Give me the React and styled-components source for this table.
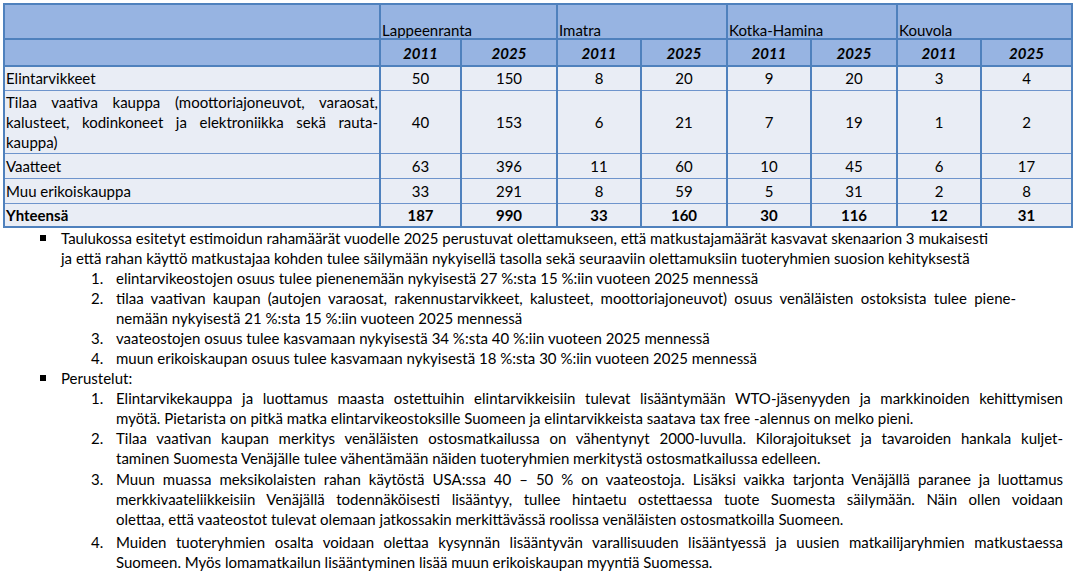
import React from "react";
import styled, { createGlobalStyle } from "styled-components";

const Global = createGlobalStyle`
  html, body { margin: 0; padding: 0; background: #fff; }
  body {
    font-family: Lato, "Open Sans", "Liberation Sans", sans-serif;
    font-size: 15px;
    color: #000;
  }
`;

const BORDER = "#4f81bd";

const Page = styled.div`
  width: 1076px;
  padding: 3px 0 0 3px;
  box-sizing: border-box;
`;

const Table = styled.table`
  border-collapse: collapse;
  table-layout: fixed;
  width: 1068px;
  border: 2px solid ${BORDER};
  font-size: 15px;
  line-height: 20px;
`;

const Row = styled.tr`
  height: ${(p) => p.$h}px;
`;

const Cell = styled.td`
  padding: 0 1px;
  background: ${(p) => (p.$head ? "#97b4e2" : "#e9edf5")};
  border-left: 2px solid ${BORDER};
  border-right: 2px solid ${BORDER};
  border-top: ${(p) => (p.$head ? 2 : 1)}px solid ${(p) => (p.$head ? BORDER : "#6e94cc")};
  border-bottom: ${(p) => (p.$head ? 2 : 1)}px solid ${(p) => (p.$head ? BORDER : "#6e94cc")};
  text-align: ${(p) => p.$align || "center"};
  vertical-align: ${(p) => p.$valign || "middle"};
  line-height: ${(p) => (p.$valign === "bottom" ? "16px" : "20px")};
  font-weight: ${(p) => (p.$bold ? 700 : 400)};
  font-style: ${(p) => (p.$italic ? "italic" : "normal")};
  white-space: nowrap;
  overflow: hidden;
`;

const Line = styled.div`
  text-align: ${(p) => (p.$justify ? "justify" : "left")};
  text-align-last: ${(p) => (p.$justify ? "justify" : "auto")};
`;

const Notes = styled.div`
  line-height: 20px;
  font-size: 15px;
`;

const Bullet = styled.div`
  display: flex;
  padding-left: 37px;
  padding-right: ${(p) => p.$right}px;
`;

const BulletMark = styled.span`
  flex: none;
  width: 21px;
  &::before {
    content: "";
    display: block;
    width: 6px;
    height: 6px;
    margin-top: 7px;
    background: #000;
  }
`;

const Numbered = styled.div`
  display: flex;
  padding-left: 88px;
  padding-right: ${(p) => p.$right}px;
  margin-top: ${(p) => p.$gap || 0}px;
`;

const NumMark = styled.span`
  flex: none;
  width: 25px;
`;

const Body = styled.div`
  flex: 1;
  min-width: 0;
`;

const cols = [376, 81, 96, 84, 86, 84, 86, 84, 91];
const cities = ["Lappeenranta", "Imatra", "Kotka-Hamina", "Kouvola"];

const rows = [
  { label: ["Elintarvikkeet"], vals: [50, 150, 8, 20, 9, 20, 3, 4], h: 24 },
  {
    label: [
      "Tilaa vaativa kauppa (moottoriajoneuvot, varaosat,",
      "kalusteet, kodinkoneet ja elektroniikka sekä rauta-",
      "kauppa)",
    ],
    vals: [40, 153, 6, 21, 7, 19, 1, 2],
    h: 63,
  },
  { label: ["Vaatteet"], vals: [63, 396, 11, 60, 10, 45, 6, 17], h: 25 },
  { label: ["Muu erikoiskauppa"], vals: [33, 291, 8, 59, 5, 31, 2, 8], h: 25 },
  { label: ["Yhteensä"], vals: [187, 990, 33, 160, 30, 116, 12, 31], h: 24, bold: true },
];

function Para({ lines }) {
  return lines.map((l, i) => (
    <Line key={i} $justify={i < lines.length - 1}>
      {l}
    </Line>
  ));
}

const list1 = [
  ["elintarvikeostojen osuus tulee pienenemään nykyisestä 27\u00a0%:sta 15\u00a0%:iin vuoteen 2025 mennessä"],
  [
    "tilaa vaativan kaupan (autojen varaosat, rakennustarvikkeet, kalusteet, moottoriajoneuvot) osuus venäläisten ostoksista tulee piene-",
    "nemään nykyisestä 21\u00a0%:sta 15\u00a0%:iin vuoteen 2025 mennessä",
  ],
  ["vaateostojen osuus tulee kasvamaan nykyisestä 34\u00a0%:sta 40\u00a0%:iin vuoteen 2025 mennessä"],
  ["muun erikoiskaupan osuus tulee kasvamaan nykyisestä 18\u00a0%:sta 30\u00a0%:iin vuoteen 2025 mennessä"],
];

const list2 = [
  [
    "Elintarvikekauppa ja luottamus maasta ostettuihin elintarvikkeisiin tulevat lisääntymään WTO-jäsenyyden ja markkinoiden kehittymisen",
    "myötä. Pietarista on pitkä matka elintarvikeostoksille Suomeen ja elintarvikkeista saatava tax free -alennus on melko pieni.",
  ],
  [
    "Tilaa vaativan kaupan merkitys venäläisten ostosmatkailussa on vähentynyt 2000-luvulla. Kilorajoitukset ja tavaroiden hankala kuljet-",
    "taminen Suomesta Venäjälle tulee vähentämään näiden tuoteryhmien merkitystä ostosmatkailussa edelleen.",
  ],
  [
    "Muun muassa meksikolaisten rahan käytöstä USA:ssa 40 – 50\u00a0% on vaateostoja. Lisäksi vaikka tarjonta Venäjällä paranee ja luottamus",
    "merkkivaateliikkeisiin Venäjällä todennäköisesti lisääntyy, tullee hintaetu ostettaessa tuote Suomesta säilymään. Näin ollen voidaan",
    "olettaa, että vaateostot tulevat olemaan jatkossakin merkittävässä roolissa venäläisten ostosmatkoilla Suomeen.",
  ],
  [
    "Muiden tuoteryhmien osalta voidaan olettaa kysynnän lisääntyvän varallisuuden lisääntyessä ja uusien matkailijaryhmien matkustaessa",
    "Suomeen. Myös lomamatkailun lisääntyminen lisää muun erikoiskaupan myyntiä Suomessa.",
  ],
];

const list2Gaps = [0, 0, 1, 3];

export default function App() {
  return (
    <Page>
      <Global />
      <Table>
        <colgroup>
          {cols.map((w, i) => (
            <col key={i} style={{ width: w }} />
          ))}
        </colgroup>
        <tbody>
          <Row $h={35}>
            <Cell $head />
            {cities.map((c) => (
              <Cell key={c} $head colSpan={2} $align="left" $valign="bottom">
                {c}
              </Cell>
            ))}
          </Row>
          <Row $h={27}>
            <Cell $head />
            {cities.map((c) => (
              <React.Fragment key={c}>
                <Cell $head $bold $italic>2011</Cell>
                <Cell $head $bold $italic>2025</Cell>
              </React.Fragment>
            ))}
          </Row>
          {rows.map((r) => (
            <Row key={r.label[0]} $h={r.h}>
              <Cell $align="left" $bold={r.bold}>
                <Para lines={r.label} />
              </Cell>
              {r.vals.map((v, i) => (
                <Cell key={i} $bold={r.bold}>
                  {v}
                </Cell>
              ))}
            </Row>
          ))}
        </tbody>
      </Table>
      <Notes>
        <Bullet $right={60}>
          <BulletMark />
          <Body>
            <Line>
              Taulukossa esitetyt estimoidun rahamäärät vuodelle 2025 perustuvat olettamukseen, että matkustajamäärät kasvavat skenaarion 3 mukaisesti
            </Line>
            <Line>
              ja että rahan käyttö matkustajaa kohden tulee säilymään nykyisellä tasolla sekä seuraaviin olettamuksiin tuoteryhmien suosion kehityksestä
            </Line>
          </Body>
        </Bullet>
        {list1.map((lines, i) => (
          <Numbered key={i} $right={60}>
            <NumMark>{i + 1}.</NumMark>
            <Body>
              <Para lines={lines} />
            </Body>
          </Numbered>
        ))}
        <Bullet $right={13}>
          <BulletMark />
          <Body>
            <Line>Perustelut:</Line>
          </Body>
        </Bullet>
        {list2.map((lines, i) => (
          <Numbered key={i} $right={13} $gap={list2Gaps[i]}>
            <NumMark>{i + 1}.</NumMark>
            <Body>
              <Para lines={lines} />
            </Body>
          </Numbered>
        ))}
      </Notes>
    </Page>
  );
}
